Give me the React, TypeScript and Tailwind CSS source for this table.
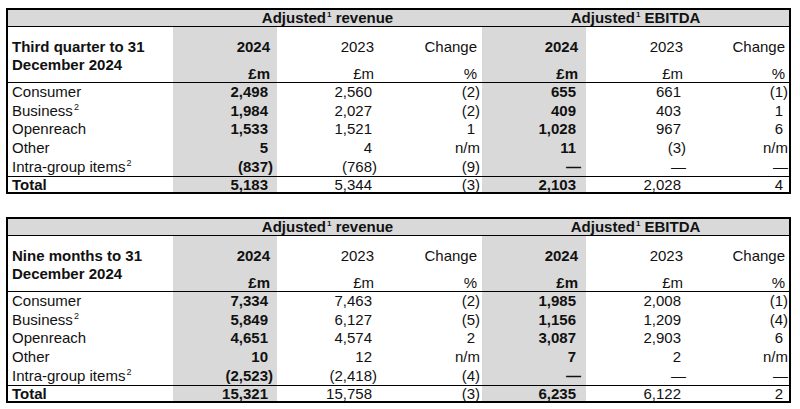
type Row = { label: string; sup?: boolean; v: string[]; total?: boolean }

const q3: Row[] = [
  { label: 'Consumer', v: ['2,498', '2,560', '(2)', '655', '661', '(1)'] },
  { label: 'Business', sup: true, v: ['1,984', '2,027', '(2)', '409', '403', '1'] },
  { label: 'Openreach', v: ['1,533', '1,521', '1', '1,028', '967', '6'] },
  { label: 'Other', v: ['5', '4', 'n/m', '11', '(3)', 'n/m'] },
  { label: 'Intra-group items', sup: true, v: ['(837)', '(768)', '(9)', '—', '—', '—'] },
  { label: 'Total', total: true, v: ['5,183', '5,344', '(3)', '2,103', '2,028', '4'] },
]

const nine: Row[] = [
  { label: 'Consumer', v: ['7,334', '7,463', '(2)', '1,985', '2,008', '(1)'] },
  { label: 'Business', sup: true, v: ['5,849', '6,127', '(5)', '1,156', '1,209', '(4)'] },
  { label: 'Openreach', v: ['4,651', '4,574', '2', '3,087', '2,903', '6'] },
  { label: 'Other', v: ['10', '12', 'n/m', '7', '2', 'n/m'] },
  { label: 'Intra-group items', sup: true, v: ['(2,523)', '(2,418)', '(4)', '—', '—', '—'] },
  { label: 'Total', total: true, v: ['15,321', '15,758', '(3)', '6,235', '6,122', '2'] },
]

// per column: width, right padding, shaded/bold
const cols = [
  { w: 'w-[104px]', pr: 'pr-[4px]', hi: true },
  { w: 'w-[104px]', pr: 'pr-[4px]', hi: false },
  { w: 'w-[101px]', pr: 'pr-[2px]', hi: false },
  { w: 'w-[104px]', pr: 'pr-[5px]', hi: true },
  { w: 'w-[104px]', pr: 'pr-[4px]', hi: false },
  { w: 'w-[99px]', pr: 'pr-[1px]', hi: false },
]

function Num({ v }: { v: string }) {
  // figures without brackets sit one bracket-width in from the edge
  if (/\d$/.test(v)) return <span className="mr-[5px]">{v}</span>
  return <span>{v}</span>
}

function FinTable({ title1, title2, rows }: { title1: string; title2: string; rows: Row[] }) {
  return (
    <div className="border-2 border-black w-[785px]">
      <table className="table-fixed border-separate border-spacing-0 w-[781px] text-[15px] text-[#111]">
        <colgroup>
          <col className="w-[165px]" />
          {cols.map((c, i) => (
            <col key={i} className={c.w} />
          ))}
        </colgroup>
        <tbody>
          <tr className="bg-[#d9d9d9]">
            <td className="border-b border-black leading-[16px] p-0"></td>
            <td colSpan={3} className="border-b border-black leading-[16px] p-0 text-center font-bold">
              Adjusted<sup className="text-[8px] -top-[6px] ml-[1px]">1</sup> revenue
            </td>
            <td colSpan={3} className="border-b border-black leading-[16px] p-0 text-center font-bold">
              Adjusted<sup className="text-[8px] -top-[6px] ml-[1px]">1</sup> EBITDA
            </td>
          </tr>
          <tr>
            <td rowSpan={2} className="border-b border-black align-top pl-[4px] pt-[11px] leading-[18px] font-bold">
              {title1}
              <br />
              {title2}
            </td>
            {cols.map((c, i) => (
              <td
                key={i}
                className={`${c.pr} pt-[11px] pb-[10px] leading-[18px] text-right ${c.hi ? 'bg-[#d9d9d9] font-bold' : ''}`}
              >
                <span className="mr-[3px]">{i === 2 || i === 5 ? 'Change' : i % 3 === 1 ? '2023' : '2024'}</span>
              </td>
            ))}
          </tr>
          <tr>
            {cols.map((c, i) => (
              <td
                key={i}
                className={`${c.pr} border-b border-black leading-[16px] text-right ${c.hi ? 'bg-[#d9d9d9] font-bold' : ''}`}
              >
                <span className="mr-[3px]">{i === 2 || i === 5 ? '%' : '£m'}</span>
              </td>
            ))}
          </tr>
          {rows.map((r) => (
            <tr key={r.label} className={r.total ? '' : 'h-[18.6px]'}>
              <td
                className={`pl-[4px] whitespace-nowrap ${
                  r.total ? 'border-t border-black leading-[15px] font-bold' : 'leading-[18px]'
                }`}
              >
                {r.label}
                {r.sup && <sup className="text-[9px] -top-[6px] ml-[1px]">2</sup>}
              </td>
              {r.v.map((v, i) => (
                <td
                  key={i}
                  className={`${cols[i].pr} text-right whitespace-nowrap ${
                    r.total ? 'border-t border-black leading-[15px]' : 'leading-[18px]'
                  } ${cols[i].hi ? 'bg-[#d9d9d9] font-bold' : ''}`}
                >
                  <Num v={v} />
                </td>
              ))}
            </tr>
          ))}
        </tbody>
      </table>
    </div>
  )
}

export default function App() {
  return (
    <div className="bg-white w-[800px] h-[409px] pt-[8px] pl-[6px] font-['Liberation_Sans',Arial,sans-serif]">
      <FinTable title1="Third quarter to 31" title2="December 2024" rows={q3} />
      <div className="mt-[23px]">
        <FinTable title1="Nine months to 31" title2="December 2024" rows={nine} />
      </div>
    </div>
  )
}
